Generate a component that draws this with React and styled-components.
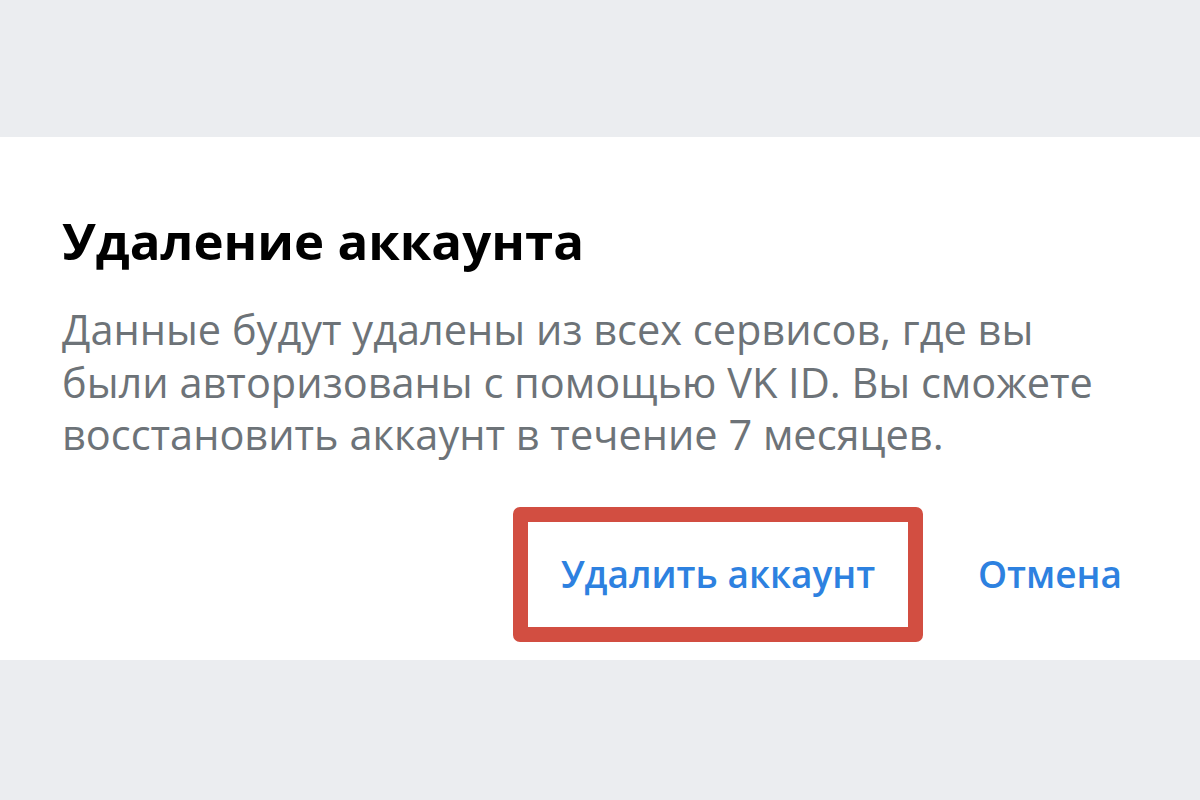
import React from "react";
import styled, { createGlobalStyle } from "styled-components";

const Global = createGlobalStyle`
  html, body { margin: 0; padding: 0; background: #ebedf0; }
  body { font-family: "Open Sans", "DejaVu Sans", sans-serif; }
`;

const Page = styled.div`
  width: 1200px;
  height: 800px;
  display: flex;
  flex-direction: column;
  background: #ebedf0;
  overflow: hidden;
`;

const Panel = styled.section`
  margin-top: 137px;
  height: 523px;
  box-sizing: border-box;
  background: #ffffff;
  padding: 73px 0 0 62px;
  display: flex;
  flex-direction: column;
`;

const Title = styled.h1`
  margin: 0;
  font-size: 51px;
  line-height: 60px;
  font-weight: 700;
  color: #000000;
`;

const Text = styled.p`
  margin: 33px 0 0;
  font-size: 41.5px;
  line-height: 52.5px;
  font-weight: 400;
  color: #6d7378;
  white-space: nowrap;
`;

const Actions = styled.div`
  display: flex;
  align-items: center;
  justify-content: flex-end;
  padding-right: 78px;
  margin-top: 46px;
  gap: 55px;
`;

const Highlight = styled.div`
  width: 410px;
  height: 135px;
  box-sizing: border-box;
  border: 15px solid #d24e41;
  border-radius: 7px;
  display: flex;
  align-items: center;
  justify-content: center;
`;

const Action = styled.button`
  background: none;
  border: none;
  padding: 0;
  font-family: inherit;
  font-size: 37px;
  line-height: 50px;
  font-weight: 600;
  color: #2d81e0;
  cursor: pointer;
`;

export default function App() {
  return (
    <Page>
      <Global />
      <Panel>
        <Title>Удаление аккаунта</Title>
        <Text>
          Данные будут удалены из всех сервисов, где вы
          <br />
          были авторизованы с помощью VK ID. Вы сможете
          <br />
          восстановить аккаунт в течение 7 месяцев.
        </Text>
        <Actions>
          <Highlight>
            <Action>Удалить аккаунт</Action>
          </Highlight>
          <Action>Отмена</Action>
        </Actions>
      </Panel>
    </Page>
  );
}
